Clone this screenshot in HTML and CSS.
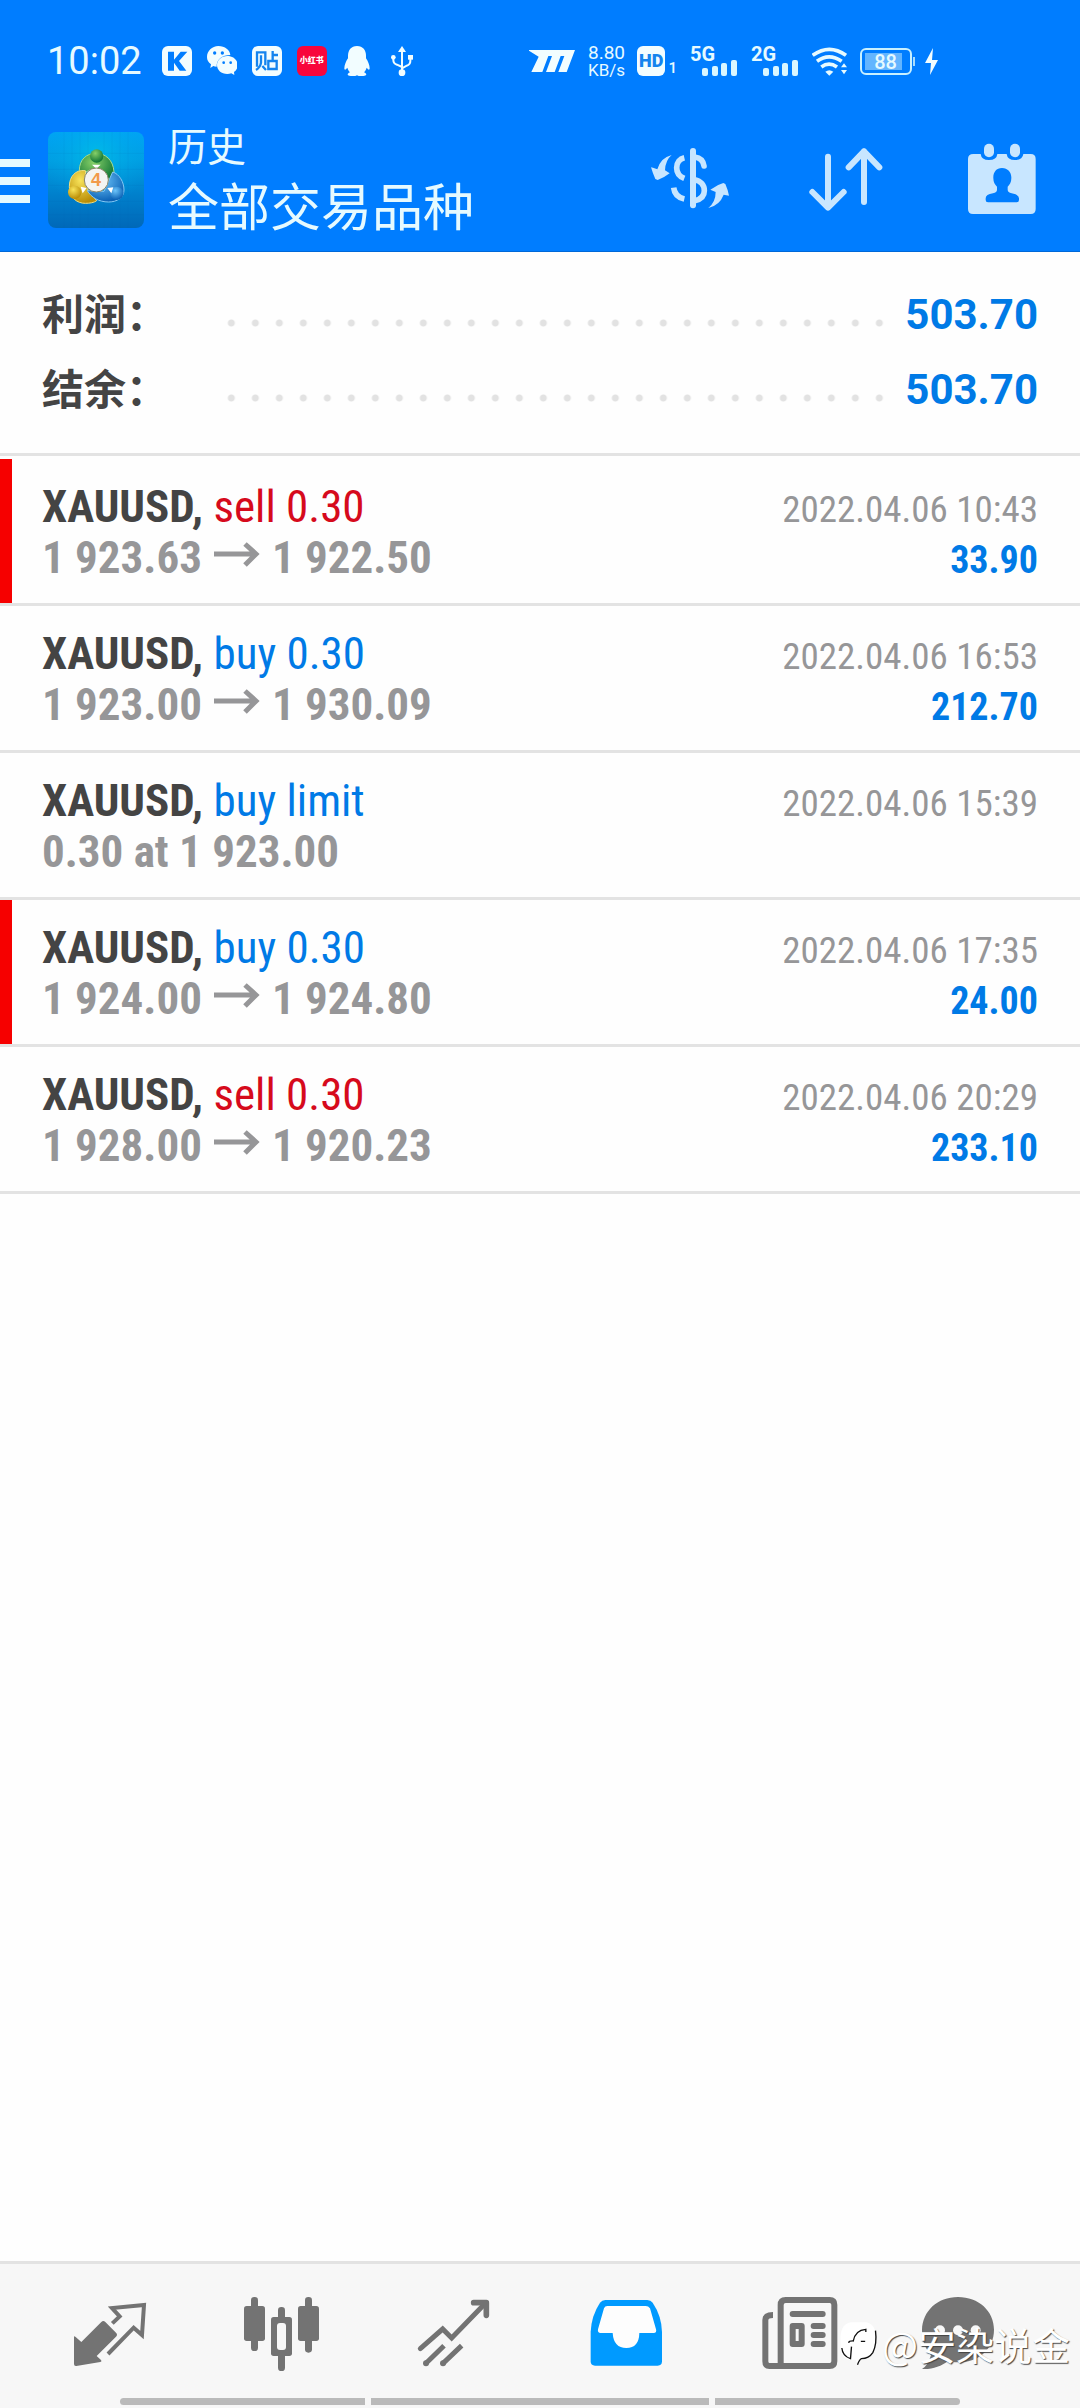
FILE: index.html
```html
<!DOCTYPE html>
<html lang="zh-CN">
<head>
<meta charset="utf-8">
<meta name="viewport" content="width=device-width, initial-scale=1">
<title>历史</title>
<link rel="stylesheet" href="styles.css">
</head>
<body>
<header class="top">
  <div class="status">
    <time class="clock">10:02</time>
    <div class="notices">
      <svg class="notice" viewBox="486 78 90 90"><rect x="486" y="78" width="90" height="90" rx="18" fill="#f2fdff"/><path d="M504 95h18v24l20-24h20l-25 28 22 29h-20l-17-24v24h-18z" fill="#007dff"/></svg>
      <svg class="notice" viewBox="621 78 90 90" fill="#f2fdff"><path d="M655 78c20 0 35 12 36 27-24 0-42 13-41 35-4 0-7-1-10-2l-9 6 2-11c-8-6-12-13-12-22 0-18 15-33 34-33z"/><path d="M682 108c18 0 31 12 31 27 0 9-4 16-11 21l1 9-9-5c-4 1-8 2-12 2-18 0-31-12-31-27s13-27 31-27z"/><g fill="#007dff"><circle cx="644" cy="99" r="5"/><circle cx="667" cy="99" r="5"/><circle cx="671" cy="128" r="4"/><circle cx="692" cy="128" r="4"/></g></svg>
      <svg class="notice" viewBox="756 78 90 90"><rect x="756" y="78" width="90" height="90" rx="18" fill="#f2fdff"/><path d="M771 140V97h25v39M783 106v22q-2 14-15 22M787 138l11 12M818 93v28M818 105h16M805 123h25v24h-25z" fill="none" stroke="#1484ee" stroke-width="7"/></svg>
      <span class="notice red-note">小红书</span>
      <svg class="notice" viewBox="1026 78 90 90" fill="#f2fdff"><path d="M1071 78c18 0 27 13 27 29v8c6 9 11 20 11 30 0 6-4 5-9-2-2 7-5 11-8 14 10 4 9 11-2 11h-14l-5-2-5 2h-14c-11 0-12-7-2-11-3-3-6-7-8-14-5 7-9 8-9 2 0-10 5-21 11-30v-8c0-16 9-29 27-29z"/></svg>
      <svg class="notice" viewBox="1161 78 90 90" fill="#f2fdff"><path d="M1206 78l12 18h-24z"/><circle cx="1206" cy="158" r="10"/><circle cx="1180" cy="112" r="7"/><path d="M1224 105h15v14h-15z"/><path d="M1206 92v62M1180 112v8q0 11 11 14l15 7M1231 115v8q0 11-11 14l-14 8" fill="none" stroke="#f2fdff" stroke-width="6"/></svg>
    </div>
    <div class="system">
      <svg class="turbo" viewBox="90 78 138 90" fill="#f2fdff"><path d="M87 90h141l-25 66h-25l18-48h-11l-18 48h-26l18-48h-11l-18 48H97l22-46z"/></svg>
      <div class="speed"><span class="speed-value">8.80</span><span class="speed-unit">KB/s</span></div>
      <div class="hd"><span class="hd-box">HD</span><span class="hd-sim">1</span></div>
      <div class="signal"><span class="signal-type">5G</span><svg class="bars" viewBox="0 0 35 16" fill="#d9f6ff"><rect y="8" width="6" height="8" rx="2"/><rect x="10" y="6" width="6" height="10" rx="2"/><rect x="19" y="3" width="6" height="13" rx="2"/><rect x="29" width="6" height="16" rx="2"/></svg></div>
      <div class="signal"><span class="signal-type">2G</span><svg class="bars" viewBox="0 0 35 16" fill="#d9f6ff"><rect y="8" width="6" height="8" rx="2"/><rect x="10" y="6" width="6" height="10" rx="2"/><rect x="19" y="3" width="6" height="13" rx="2"/><rect x="29" width="6" height="16" rx="2"/></svg></div>
      <svg class="wifi" viewBox="933 78 105 90" fill="none" stroke="#e6faff" stroke-width="11"><path d="M935 106q50-36 100 0M948 124q36-27 74 0M961 141q23-17 47 0"/><path d="M973 155q12-9 24 0l-12 12z" fill="#e6faff" stroke="none"/><path d="M1020 142l9-12 9 12zM1020 150l9 13 9-13z" fill="#e6faff" stroke="none"/></svg>
      <div class="battery"><span class="battery-level">88</span></div>
      <svg class="bolt" viewBox="0 0 13 27" fill="#f2fdff"><path d="M8 0L0 15h6l-1 12 8-15H7z"/></svg>
    </div>
  </div>
  <div class="appbar">
    <button class="menu" aria-label="菜单"><span class="menu-line"></span><span class="menu-line"></span><span class="menu-line"></span></button>
    <svg class="logo" viewBox="144 336 288 288">
      <defs>
        <linearGradient id="sky" x1="0" y1="0" x2="0" y2="1"><stop offset="0" stop-color="#00a4f4"/><stop offset=".3" stop-color="#009fe2"/><stop offset=".65" stop-color="#0080cc"/><stop offset="1" stop-color="#0068b8"/></linearGradient>
        <radialGradient id="glow" cx=".5" cy=".25" r=".55"><stop offset="0" stop-color="#00c8e8" stop-opacity=".7"/><stop offset="1" stop-color="#00a0e8" stop-opacity="0"/></radialGradient>
        <radialGradient id="green" cx=".4" cy=".3" r=".7"><stop offset="0" stop-color="#86d068"/><stop offset="1" stop-color="#0f7434"/></radialGradient>
        <radialGradient id="gold" cx=".4" cy=".3" r=".7"><stop offset="0" stop-color="#f8e45a"/><stop offset="1" stop-color="#b98c06"/></radialGradient>
        <radialGradient id="blue" cx=".4" cy=".3" r=".7"><stop offset="0" stop-color="#6cc4fa"/><stop offset="1" stop-color="#0a60b4"/></radialGradient>
      </defs>
      <rect x="144" y="336" width="288" height="288" rx="24" fill="url(#sky)"/>
      <rect x="144" y="336" width="288" height="288" rx="24" fill="url(#glow)"/>
      <path d="M192 336v288M216 336v288M240 336v288M264 336v288M312 336v288M336 336v288M360 336v288M384 336v288M144 400h288M144 448h288M144 496h288M144 544h288M144 584h288" stroke="#0a5fa8" stroke-opacity=".13" stroke-width="2"/>
      <path d="M238 452c0-34 22-52 50-52s52 20 54 56c0 12-3 24-8 34l-20-30-44-10-30 14z" fill="url(#green)" stroke="#a4dc90" stroke-width="3"/>
      <path d="M256 452c-30-4-48 18-48 48 0 34 24 50 48 50 14 0 26-2 34-8l-26-30z" fill="url(#gold)" stroke="#f0de80" stroke-width="3"/>
      <path d="M338 456c20 6 34 30 34 54 0 22-20 36-46 36-30 0-52-14-64-34l50 2z" fill="url(#blue)" stroke="#84c8f4" stroke-width="3"/>
      <circle cx="290" cy="408" r="20" fill="url(#green)"/><circle cx="224" cy="517" r="20" fill="url(#gold)"/><circle cx="350" cy="520" r="20" fill="url(#blue)"/>
      <path d="M276 434h26l-13 12zM242 500l18 4-12 16zM322 504l18-2-6 18z" fill="#fff"/>
      <circle cx="289" cy="480" r="36" fill="#f4f4f2" stroke="#8a8468" stroke-width="3"/>
      <text class="logo-digit" x="288" y="499" text-anchor="middle">4</text>
    </svg>
    <h1 class="titles"><span class="title-small">历史</span><span class="title-main">全部交易品种</span></h1>
    <div class="actions">
      <button class="action" aria-label="货币"><svg class="icon" viewBox="84 54 252 252" fill="none" stroke="#c8e6ff" stroke-width="17"><path d="M219 93v163" stroke-width="18" stroke-linecap="round"/><path d="M193 113c-13 3-23 14-23 30s10 27 23 32M161 203c2 18 14 30 32 34"/><path d="M224 111c15 2 26 11 28 27" stroke-linecap="round"/><path d="M224 179c19 4 29 17 29 33 0 15-11 26-29 30"/><path d="M155 105q-19 16-20 46l14 9q-18 14-36 20l-7-3q-8-18-13-35l6 1 13 5q10-35 43-43zM265 264q22-18 22-48l-16-7q20-15 39-20l6 3q8 18 11 35l-16-3q-12 32-46 40z" fill="#c8e6ff" stroke="none"/></svg></button>
      <button class="action" aria-label="排序"><svg class="icon" viewBox="552 54 252 252" fill="none" stroke="#c8e6ff" stroke-width="18" stroke-linecap="round" stroke-linejoin="round"><path d="M624 110v152M577 216l47 47 47-47M732 246V94M686 142l46-48 46 48"/></svg></button>
      <button class="action" aria-label="日期"><svg class="icon" viewBox="1020 54 252 252" fill="#c8e6ff"><path d="M1060 102h22q2 18 25 18t25-18h28q2 18 25 18t25-18h22q15 0 15 15v150q0 15-15 15h-173q-15 0-15-15V117q0-15 16-15z"/><rect x="1092" y="71" width="30" height="41" rx="15"/><rect x="1170" y="71" width="30" height="41" rx="15"/><path d="M1146 144c18 0 29 14 28 31 0 12-5 19-11 25v9q0 8 12 11 22 3 22 15v5q0 7-7 7h-86q-7 0-7-7v-5q0-12 22-15 12-3 12-11v-9c-6-6-11-13-11-25-1-17 8-31 26-31z" fill="#007dff"/></svg></button>
    </div>
  </div>
</header>

<main class="content">
  <dl class="summary">
    <div class="summary-row"><dt class="summary-label">利润：</dt><dd class="summary-value">503.70</dd></div>
    <div class="summary-row"><dt class="summary-label">结余：</dt><dd class="summary-value">503.70</dd></div>
  </dl>
  <ul class="deals">
    <li class="deal marked">
      <div class="line"><span class="symbol">XAUUSD, <span class="sell">sell 0.30</span></span><time class="date">2022.04.06 10:43</time></div>
      <div class="line"><span class="price">1 923.63<svg class="arrow" viewBox="0 0 46 25"><path d="M0 12h41M31 2l11 10-11 11"/></svg>1 922.50</span><span class="profit">33.90</span></div>
    </li>
    <li class="deal">
      <div class="line"><span class="symbol">XAUUSD, <span class="buy">buy 0.30</span></span><time class="date">2022.04.06 16:53</time></div>
      <div class="line"><span class="price">1 923.00<svg class="arrow" viewBox="0 0 46 25"><path d="M0 12h41M31 2l11 10-11 11"/></svg>1 930.09</span><span class="profit">212.70</span></div>
    </li>
    <li class="deal">
      <div class="line"><span class="symbol">XAUUSD, <span class="buy">buy limit</span></span><time class="date">2022.04.06 15:39</time></div>
      <div class="line"><span class="price">0.30 at 1 923.00</span></div>
    </li>
    <li class="deal marked">
      <div class="line"><span class="symbol">XAUUSD, <span class="buy">buy 0.30</span></span><time class="date">2022.04.06 17:35</time></div>
      <div class="line"><span class="price">1 924.00<svg class="arrow" viewBox="0 0 46 25"><path d="M0 12h41M31 2l11 10-11 11"/></svg>1 924.80</span><span class="profit">24.00</span></div>
    </li>
    <li class="deal">
      <div class="line"><span class="symbol">XAUUSD, <span class="sell">sell 0.30</span></span><time class="date">2022.04.06 20:29</time></div>
      <div class="line"><span class="price">1 928.00<svg class="arrow" viewBox="0 0 46 25"><path d="M0 12h41M31 2l11 10-11 11"/></svg>1 920.23</span><span class="profit">233.10</span></div>
    </li>
  </ul>
</main>

<footer class="bottom">
  <nav class="tabs">
    <a class="tab" href="#quotes" aria-label="行情"><svg class="icon" viewBox="24 12 252 252"><path d="M42 156q0-5 5 0l17 15 60-60q6-6 12 0l32 32q6 6 0 12l-58 58 13 12q4 4-2 6l-72 12q-7 1-7-6z" fill="#737373"/><path d="M157 115l22-21-23-25 96-9-6 90-25-22-77 79" fill="none" stroke="#737373" stroke-width="12" stroke-linejoin="miter"/></svg></a>
    <a class="tab" href="#chart" aria-label="图表"><svg class="icon" viewBox="540 12 252 252" fill="#737373"><rect x="573" y="36" width="21" height="162" rx="10"/><rect x="552" y="63" width="63" height="105" rx="8"/><rect x="735" y="36" width="21" height="167" rx="10"/><rect x="714" y="63" width="63" height="105" rx="8"/><rect x="654" y="66" width="21" height="192" rx="10"/><rect x="633" y="96" width="63" height="117" rx="8"/><rect x="651" y="114" width="27" height="81" rx="9" fill="#f7f7f7"/></svg></a>
    <a class="tab" href="#trade" aria-label="交易"><svg class="icon" viewBox="1056 12 252 252" fill="none" stroke="#737373" stroke-width="15" stroke-linejoin="miter"><path d="M1081 191l67-59 27 27 101-104" stroke-linecap="round"/><path d="M1241 53h38v38" stroke-width="17" stroke-linecap="round" stroke-linejoin="round"/><path d="M1152 182l-54 53M1205 182l-56 53"/><g fill="#737373" stroke="none"><circle cx="1098" cy="235" r="9"/><circle cx="1149" cy="235" r="9"/></g></svg></a>
    <a class="tab" href="#history" aria-label="历史" aria-current="page"><svg class="icon" viewBox="12 12 252 252"><path fill="#009aff" d="M76 45h126q10 0 16 8 27 40 28 88v88q0 13-13 13H45q-13 0-13-13v-88q2-49 28-88 6-8 16-8z"/><path fill="#fdfdfd" d="M82 63h115q8 0 13 7l18 63q3 11-7 11h-43q-1 45-39 45t-41-45H62q-10 0-8-11l18-63q3-7 10-7z"/></svg></a>
    <a class="tab" href="#news" aria-label="新闻"><svg class="icon" viewBox="528 12 252 252" fill="none" stroke="#737373" stroke-width="18"><path d="M617 45h132q14 0 14 14v170q0 14-14 14H568q-12 0-12-14V105q0-15 23-15M602 243V60q0-15 15-15"/><path d="M638 87h90M701 123h27M701 150h27M701 177h27" stroke-linecap="round"/><path d="M638 123h27v54h-27z" stroke-linejoin="round"/></svg></a>
    <a class="tab" href="#chat" aria-label="聊天"><svg class="icon" viewBox="288 12 252 252"><path d="M414 36c62 0 108 42 108 98 0 58-46 98-106 98-14 0-22-1-32-4-20 16-48 26-78 24q18-10 27-42c-18-20-27-44-27-76 2-56 46-98 108-98z" fill="#737373"/><g fill="#f7f7f7"><circle cx="360" cy="136" r="15"/><circle cx="414" cy="136" r="15"/><circle cx="467" cy="136" r="15"/></g></svg></a>
  </nav>
  <div class="gesture"><span class="pill side-left"></span><span class="pill middle"></span><span class="pill side-right"></span></div>
  <div class="watermark">
    <svg class="watermark-logo" viewBox="56 130 116 132"><path d="M92 131h44q30 4 29 44v30q-4 34-44 38l-10 14-6-14H84q-26-10-24-38v-30q2-40 32-44z" fill="#fff"/><path d="M64 208q2 24 26 32l3-36M84 192q2-6 16-5M98 188q6-34 38-36v8M121 188h13M165 156q5 40-8 66-12 18-34 18-6 2-12 18" fill="none" stroke="#111" stroke-width="4"/></svg>
    <span>@安染说金</span>
  </div>
</footer>
</body>
</html>
```
FILE: styles.css
```css
* { box-sizing: border-box; }

body {
  margin: 0;
  min-height: 100vh;
  display: flex;
  flex-direction: column;
  background: #fefefe;
  font-family: Roboto, "Noto Sans CJK SC", sans-serif;
}

svg { display: block; }
button { padding: 0; border: 0; background: none; }
ul, dl, dd, h1 { margin: 0; padding: 0; font-weight: 400; }
ul { list-style: none; }

/* Header */
.top {
  background: #007dff;
  color: #e6faff;
  border-bottom: 1px solid #0068d8;
}
.status {
  display: flex;
  align-items: center;
  height: 120px;
  padding: 2px 142px 0 47px;
}
.clock { font-size: 38px; line-height: 44px; }
.notices { display: flex; gap: 15px; margin-left: 20px; }
.notice { width: 30px; height: 30px; }
.red-note {
  border-radius: 6px;
  background: #f8063c;
  color: #fff;
  font-size: 8px;
  font-weight: 900;
  line-height: 30px;
  text-align: center;
  white-space: nowrap;
}
.system { display: flex; align-items: center; gap: 13px; margin-left: auto; }
.turbo { width: 46px; height: 30px; }
.speed { display: flex; flex-direction: column; width: 36px; }
.speed-value { font-size: 19px; line-height: 18px; }
.speed-unit { font-size: 17px; line-height: 16px; }
.hd { display: flex; align-items: flex-end; gap: 3px; width: 40px; }
.hd-box {
  width: 30px;
  height: 30px;
  border-radius: 6px;
  background: #f2fdff;
  color: #1484ee;
  font-size: 18px;
  font-weight: 900;
  line-height: 30px;
  text-align: center;
}
.hd-sim { font-size: 15px; line-height: 15px; font-weight: 500; }
.signal { display: flex; flex-direction: column; width: 48px; height: 30px; }
.signal-type { font-size: 20px; font-weight: 700; line-height: 16px; height: 14px; }
.bars { width: 35px; height: 16px; margin-left: 12px; }
.wifi { width: 35px; height: 30px; }
.battery {
  position: relative;
  width: 52px;
  height: 27px;
  padding: 3px;
  border: 2px solid #c8f0ff;
  border-radius: 6px;
}
.battery::after {
  content: "";
  position: absolute;
  top: 7px;
  right: -5px;
  width: 2px;
  height: 9px;
  background: #a5dcff;
}
.battery-level {
  display: block;
  width: 37px;
  height: 17px;
  padding-left: 4px;
  background: #63b5ff;
  font-size: 20px;
  font-weight: 500;
  line-height: 18px;
  text-align: center;
}
.bolt { width: 13px; height: 27px; }

.appbar { display: flex; align-items: center; height: 131px; padding: 0 36px 12px 0; }
.menu { display: flex; flex-direction: column; gap: 10px; width: 30px; padding-top: 3px; }
.menu-line { height: 8px; background: #e6faff; }
.logo { width: 96px; height: 96px; margin-left: 18px; }
.logo-digit { font: 700 54px "Liberation Sans", sans-serif; fill: #f29a4a; }
.titles { display: flex; flex-direction: column; margin-left: 24px; padding-bottom: 4px; font-family: "Noto Sans CJK SC", sans-serif; }
.title-small { font-size: 39px; line-height: 52px; }
.title-main { font-size: 51px; line-height: 68px; }
.actions { display: flex; gap: 72px; margin-left: auto; }
.icon { width: 84px; height: 84px; }

/* Totals */
.content { flex: 1; }
.summary { padding: 24px 42px 27px; border-bottom: 3px solid #e3e3e3; }
.summary-row { display: flex; align-items: center; height: 75px; font-size: 42px; }
.summary-label {
  width: 176px;
  padding-bottom: 4px;
  color: #444;
  font-family: "Noto Sans CJK SC", sans-serif;
  font-weight: 700;
  line-height: 71px;
}
.summary-value { flex: 1; display: flex; gap: 14px; padding-top: 2px; color: #007ae6; font-weight: 700; line-height: 73px; }
.summary-value::before {
  content: "";
  flex: 1;
  background: radial-gradient(circle at 12px 45px, #e2e2e2 3px, transparent 4px) right top / 24px 73px repeat-x;
}

/* Deals */
.deals { padding-top: 3px; font-family: "Roboto Condensed", Roboto, sans-serif; }
.deal { padding: 22px 42px 20px; border-bottom: 3px solid #e3e3e3; }
.marked { background: linear-gradient(#f60000, #f60000) left top / 12px 100% no-repeat padding-box; }
.line { display: flex; justify-content: space-between; align-items: baseline; height: 51px; font-size: 45px; line-height: 51px; }
.symbol { color: #444; font-weight: 700; }
.sell, .buy { font-weight: 400; }
.sell { color: #d60a1c; }
.buy { color: #007ae6; }
.price { color: #969698; font-weight: 700; }
.arrow { display: inline-block; width: 46px; height: 25px; margin: 0 12px; vertical-align: 6px; fill: none; stroke: #969698; stroke-width: 5px; }
.date { color: #969698; font-size: 37px; }
.profit { color: #007ae6; font-size: 38px; font-weight: 700; }

/* Tab bar */
.bottom { position: relative; border-top: 3px solid #e3e3e3; background: #f7f7f7; }
.tabs { display: grid; grid-template-columns: repeat(6, 1fr); height: 134px; padding: 0 24px; }
.tab { display: flex; align-items: center; justify-content: center; }
.tab:last-child { padding-right: 24px; }
.gesture { display: flex; gap: 6px; margin: 0 120px; padding-bottom: 3px; }
.pill { height: 7px; background: #bababa; }
.side-left { flex: 245; border-radius: 4px 0 0 4px; }
.middle { flex: 338; }
.side-right { flex: 245; border-radius: 0 4px 4px 0; }
.watermark {
  position: absolute;
  right: 10px;
  bottom: 37px;
  display: flex;
  align-items: center;
  gap: 4px;
  color: #fff;
  font: 38px/54px "Noto Sans CJK SC", sans-serif;
  text-shadow: 1px 1px 1px #444;
}
.watermark-logo { width: 39px; height: 44px; }
```
